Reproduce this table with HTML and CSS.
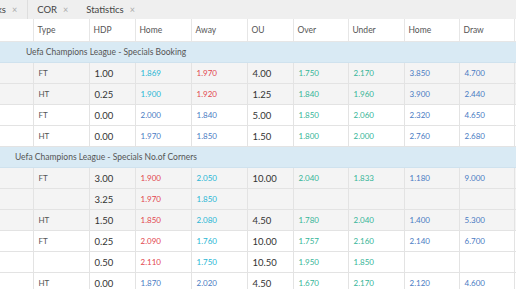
FILE: index.html
```html
<!DOCTYPE html>
<html>
<head>
<meta charset="utf-8">
<link rel="stylesheet" href="styles.css">
</head>
<body>
<div class="tabs">
  <div class="tab tab-active">ks <span class="x">×</span></div>
  <div class="tab">COR <span class="x">×</span></div>
  <div class="tab">Statistics <span class="x">×</span></div>
</div>
<div class="wrap">
<table class="odds">
  <colgroup>
    <col class="c0"><col class="c1"><col class="c2"><col class="c3"><col class="c4"><col class="c5"><col class="c6"><col class="c7"><col class="c8"><col class="c9"><col class="c10">
  </colgroup>
  <thead>
    <tr><th></th><th>Type</th><th>HDP</th><th>Home</th><th>Away</th><th>OU</th><th>Over</th><th>Under</th><th>Home</th><th>Draw</th><th></th></tr>
  </thead>
  <tbody>
    <tr class="league"><td colspan="11"><div class="lname">Uefa Champions League - Specials Booking</div></td></tr>
    <tr class="g"><td></td><td class="t">FT</td><td class="h">1.00</td><td class="cy">1.869</td><td class="rd">1.970</td><td class="h">4.00</td><td class="gr">1.750</td><td class="gr">2.170</td><td class="bl">3.850</td><td class="bl">4.700</td><td></td></tr>
    <tr class="g"><td></td><td class="t">HT</td><td class="h">0.25</td><td class="cy">1.900</td><td class="rd">1.920</td><td class="h">1.25</td><td class="gr">1.840</td><td class="gr">1.960</td><td class="bl">3.900</td><td class="bl">2.440</td><td></td></tr>
    <tr class="w"><td></td><td class="t">FT</td><td class="h">0.00</td><td class="bl">2.000</td><td class="bl">1.840</td><td class="h">5.00</td><td class="gr">1.850</td><td class="gr">2.060</td><td class="bl">2.320</td><td class="bl">4.650</td><td></td></tr>
    <tr class="w"><td></td><td class="t">HT</td><td class="h">0.00</td><td class="bl">1.970</td><td class="bl">1.850</td><td class="h">1.50</td><td class="gr">1.800</td><td class="gr">2.000</td><td class="bl">2.760</td><td class="bl">2.680</td><td></td></tr>
    <tr class="league"><td colspan="11"><div class="lname">Uefa Champions League - Specials No.of Corners</div></td></tr>
    <tr class="g"><td></td><td class="t">FT</td><td class="h">3.00</td><td class="rd">1.900</td><td class="cy">2.050</td><td class="h">10.00</td><td class="gr">2.040</td><td class="gr">1.833</td><td class="bl">1.180</td><td class="bl">9.000</td><td></td></tr>
    <tr class="g"><td></td><td class="t"></td><td class="h">3.25</td><td class="rd">1.970</td><td class="cy">1.850</td><td class="h"></td><td class="gr"></td><td class="gr"></td><td class="bl"></td><td class="bl"></td><td></td></tr>
    <tr class="g"><td></td><td class="t">HT</td><td class="h">1.50</td><td class="rd">1.850</td><td class="cy">2.080</td><td class="h">4.50</td><td class="gr">1.780</td><td class="gr">2.040</td><td class="bl">1.400</td><td class="bl">5.300</td><td></td></tr>
    <tr class="w"><td></td><td class="t">FT</td><td class="h">0.25</td><td class="rd">2.090</td><td class="cy">1.760</td><td class="h">10.00</td><td class="gr">1.757</td><td class="gr">2.160</td><td class="bl">2.140</td><td class="bl">6.700</td><td></td></tr>
    <tr class="w"><td></td><td class="t"></td><td class="h">0.50</td><td class="rd">2.110</td><td class="cy">1.750</td><td class="h">10.50</td><td class="gr">1.950</td><td class="gr">1.850</td><td class="bl"></td><td class="bl"></td><td></td></tr>
    <tr class="w"><td></td><td class="t">HT</td><td class="h">0.00</td><td class="bl">1.870</td><td class="bl">2.020</td><td class="h">4.50</td><td class="gr">1.670</td><td class="gr">2.170</td><td class="bl">2.120</td><td class="bl">4.600</td><td></td></tr>
  </tbody>
</table>
</div>
</body>
</html>
```
FILE: styles.css
```css
html, body {
  margin: 0;
  padding: 0;
  background: #ffffff;
  font-family: Lato, "Open Sans", sans-serif;
  overflow: hidden;
}
.tabs {
  display: flex;
  height: 19px;
  background: #efefef;
  align-items: stretch;
  font-size: 9.5px;
  color: #444;
  overflow: hidden;
}
.tab {
  display: flex;
  align-items: center;
  padding: 0 9px 0 9px;
  flex: none;
}
.tab-active {
  margin-left: -3px;
  padding-left: 0;
  padding-right: 10px;
  border-right: 1px solid #dedede;
}
.x {
  color: #aaa;
  font-size: 9px;
  margin-left: 6px;
}
.wrap {
  width: 516px;
  overflow: hidden;
}
.odds {
  border-collapse: collapse;
  table-layout: fixed;
  width: 516px;
  font-size: 8px;
}
.c0 { width: 33px; }
.c1 { width: 56px; }
.c2 { width: 46px; }
.c3 { width: 56px; }
.c4 { width: 56px; }
.c5 { width: 46px; }
.c6 { width: 55px; }
.c7 { width: 56px; }
.c8 { width: 55px; }
.c9 { width: 55px; }
.c10 { width: 3px; }
.odds th {
  height: 22px;
  padding: 0 0 0 4px;
  text-align: left;
  font-weight: normal;
  font-size: 8.5px;
  color: #555;
  background: #fff;
  border-left: 1px solid #e6e6e6;
  border-bottom: 1px solid #e6e6e6;
  overflow: hidden;
}
.odds th:first-child { border-left: none; }
.odds td {
  height: 20px;
  padding: 0 0 0 5px;
  border-left: 1px solid #e3e3e3;
  border-bottom: 1px solid #e3e3e3;
  white-space: nowrap;
  overflow: hidden;
}
.odds td:first-child { border-left: none; }
.g td { background: #f4f4f4; }
.w td { background: #ffffff; }
.league td {
  background: #d9eaf4;
  padding: 0;
  border-left: none;
  border-bottom: 1px solid #cfe2ee;
}
.lname {
  width: 212px;
  text-align: center;
  font-size: 8.5px;
  color: #555;
}
.t { color: #555; font-size: 8px; }
.h { color: #333; font-size: 9.5px; }
.cy { color: #29b6d4; }
.rd { color: #e2464e; }
.bl { color: #4a7bc3; }
.gr { color: #36b598; }
```
